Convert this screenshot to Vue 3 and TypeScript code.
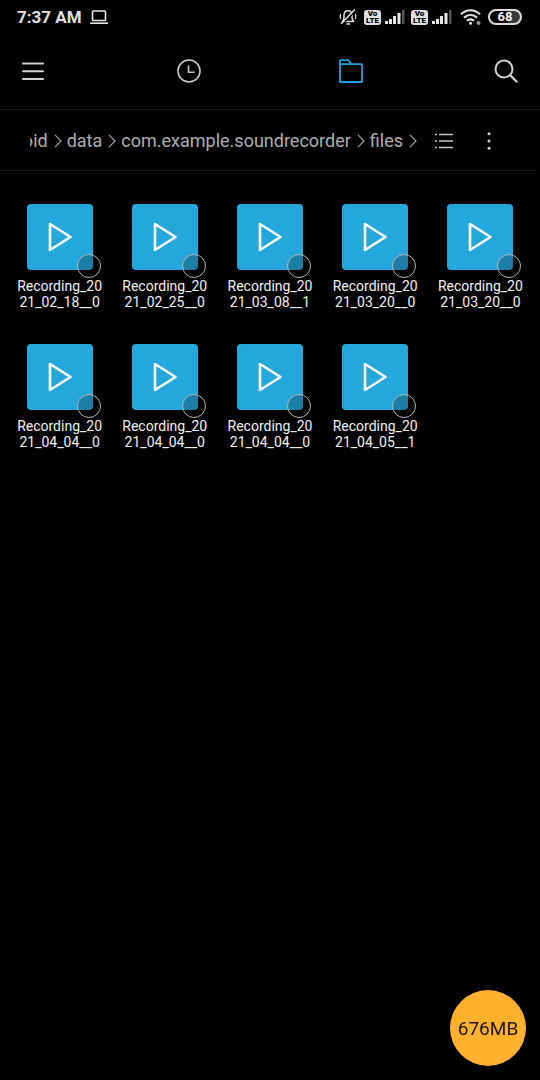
<script setup lang="ts">
import { ref } from 'vue'

interface Recording {
  id: number
  lines: [string, string]
}

const crumbs: string[] = ['Android', 'data', 'com.example.soundrecorder', 'files']

const recordings: Recording[] = [
  '21_02_18__0',
  '21_02_25__0',
  '21_03_08__1',
  '21_03_20__0',
  '21_03_20__0',
  '21_04_04__0',
  '21_04_04__0',
  '21_04_04__0',
  '21_04_05__1',
].map((rest, id) => ({ id, lines: ['Recording_20', rest] }))

const selected = ref<number[]>([])
const sims = [1, 2]
</script>

<template>
  <div class="screen">
    <header class="status">
      <div class="status-left">
        <span class="time">7:37 AM</span>
        <svg width="20" height="16" viewBox="0 0 20 16" fill="none" stroke="#e6e6e6" stroke-width="1.6">
          <rect x="3.5" y="2" width="13" height="9.5" rx="0.8" />
          <path d="M1 14.2h18" />
        </svg>
      </div>
      <div class="status-right">
        <svg class="bell" width="20" height="18" viewBox="0 0 20 18" fill="none" stroke="#e0e0e0" stroke-width="1.5" stroke-linecap="round" stroke-linejoin="round">
          <path d="M4.500 13.500h11c-1.200-1.200-1.500-2.300-1.500-4.500V7.500C14 4.500 12.300 2.800 10 2.800S6 4.500 6 7.500V9c0 2.200-.3 3.300-1.500 4.500z" />
          <path d="M9 16h2.500" />
          <path d="M2.500 6.500c-.4 1.300-.4 2.500 0 3.800M17.500 6.500c.4 1.300.4 2.500 0 3.800" stroke-width="1.300" />
          <path d="M4.800 16L17.500 2.700" stroke="#000" stroke-width="1.400" />
          <path d="M3.500 15.500L16.500 1.800" stroke-width="1.500" />
        </svg>
        <div v-for="sim in sims" :key="sim" class="sim">
          <span class="volte"><span>Vo</span><span>LTE</span></span>
          <svg width="20" height="14" viewBox="0 0 20 14" fill="#e6e6e6">
            <rect x="0" y="11" width="3" height="3" />
            <rect x="4" y="9" width="3" height="5" />
            <rect x="8" y="6" width="3" height="8" />
            <rect x="12.500" y="3" width="3" height="11" />
            <rect x="17" y="0" width="2.500" height="14" fill="#555" />
          </svg>
        </div>
        <svg class="wifi" width="22" height="18" viewBox="0 0 22 18" fill="none" stroke="#e6e6e6" stroke-width="2.200">
          <path d="M1 6.300C6.700.9 14.300.9 20 6.300" />
          <path d="M4 9.600c3.900-3.500 9.100-3.500 13 0" />
          <path d="M7 12.700c2.200-1.800 4.800-1.800 7 0" />
          <circle cx="10.500" cy="15.200" r="1.500" fill="#e6e6e6" stroke="none" />
          <circle cx="18.500" cy="15" r="2" fill="#999" stroke="none" />
        </svg>
        <span class="battery">68</span>
      </div>
    </header>

    <nav class="toolbar">
      <button type="button" class="menu" aria-label="Menu">
        <svg width="24" height="24" viewBox="0 0 24 24" stroke="#d0d0d0" stroke-width="2" stroke-linecap="round">
          <path d="M2 4.500h20M2 12.200h20M2 20h20" />
        </svg>
      </button>
      <button type="button" aria-label="Recent">
        <svg width="24" height="24" viewBox="0 0 24 24" fill="none" stroke="#cacaca" stroke-width="1.600">
          <circle cx="12" cy="12" r="11" />
          <path d="M11.500 6.500v6.700h6" />
        </svg>
      </button>
      <button type="button" aria-label="Folders">
        <svg width="24" height="24" viewBox="0 0 24 24" fill="none" stroke="#219fdc" stroke-width="1.800" stroke-linejoin="round">
          <path d="M1 23V1.200h8.500l3 4H23V23zM1 5.200h11.500" />
        </svg>
      </button>
      <button type="button" class="search" aria-label="Search">
        <svg width="24" height="24" viewBox="0 0 24 24" fill="none" stroke="#d0d0d0" stroke-width="2" stroke-linecap="round">
          <circle cx="10" cy="10" r="8.500" />
          <path d="M16 16l6.500 6.500" stroke-width="2.400" />
        </svg>
      </button>
    </nav>

    <div class="pathbar">
      <div class="crumbs">
        <a v-for="crumb in crumbs" :key="crumb" href="#">
          <span>{{ crumb }}</span>
          <svg width="8" height="14" viewBox="0 0 8 14" fill="none" stroke="#a0a0a0" stroke-width="1.200">
            <path d="M1 .8l6 6.200-6 6.200" />
          </svg>
        </a>
      </div>
      <button type="button" class="view" aria-label="List view">
        <svg width="18" height="18" viewBox="0 0 18 18" stroke="#c4c4c4" stroke-width="1.500">
          <path d="M0 2.500h2M4 2.500h14M0 9h2M4 9h14M0 15.500h2M4 15.500h14" />
        </svg>
      </button>
      <button type="button" class="more" aria-label="More options">
        <svg width="4" height="18" viewBox="0 0 4 18" fill="#d0d0d0">
          <circle cx="2" cy="1.700" r="1.500" />
          <circle cx="2" cy="9" r="1.500" />
          <circle cx="2" cy="16.300" r="1.500" />
        </svg>
      </button>
    </div>

    <main class="files">
      <label v-for="rec in recordings" :key="rec.id" class="file">
        <span class="thumb">
          <svg width="24" height="30" viewBox="0 0 24 30" fill="none" stroke="#fff" stroke-width="2.600" stroke-linejoin="round">
            <path d="M2 2v26L22.500 15z" />
          </svg>
          <input v-model="selected" type="checkbox" :value="rec.id" />
        </span>
        <span class="name">{{ rec.lines[0] }}<br />{{ rec.lines[1] }}</span>
      </label>
    </main>

    <button type="button" class="memory">676MB</button>
  </div>
</template>

<style>
body {
  background: #000;
}
</style>

<style scoped>
.screen {
  min-height: 100vh;
  background: #000;
  color: #f2f2f2;
  font-family: Roboto, "Liberation Sans", sans-serif;
}

button {
  display: flex;
  align-items: center;
  justify-content: center;
  padding: 0;
  border: 0;
  background: none;
  color: inherit;
  font-family: inherit;
}

svg {
  display: block;
  flex: none;
}

.status,
.status-left,
.status-right,
.sim {
  display: flex;
  align-items: center;
}

.status {
  justify-content: space-between;
  height: 34px;
  padding: 0 18px 0 17px;
}

.status-left {
  gap: 7px;
}

.time {
  font-size: 17px;
  font-weight: 700;
  line-height: 20px;
  color: #e0e0e0;
}

.status-right {
  gap: 6px;
}

.wifi {
  margin-left: 2px;
}

.sim {
  gap: 4px;
}

.volte {
  display: flex;
  flex-direction: column;
  justify-content: center;
  width: 17px;
  height: 15px;
  border-radius: 3px;
  background: #e0e0e0;
  color: #000;
  font-size: 8px;
  font-weight: 900;
  line-height: 7px;
  text-align: center;
}

.battery {
  width: 30px;
  border: 2px solid #dcdcdc;
  border-radius: 8px;
  background: linear-gradient(90deg, #000 60%, #383838 60%);
  color: #f0f0f0;
  font-size: 13px;
  font-weight: 700;
  line-height: 12px;
  text-align: center;
}

.toolbar {
  display: grid;
  grid-template-columns: 2fr 3fr 3fr 2fr;
  height: 73px;
  padding-bottom: 2px;
  border-bottom: 1px solid #1c1c1c;
}

.menu {
  justify-content: flex-start;
  padding-left: 21px;
}

.search {
  justify-content: flex-end;
  padding-right: 22px;
}

.pathbar {
  display: flex;
  align-items: center;
  height: 58px;
  margin-right: 5px;
  padding: 2px 0 0 30px;
  border-bottom: 1px solid #1c1c1c;
}

.crumbs {
  display: flex;
  flex: 1;
  justify-content: flex-end;
  gap: 5px;
  min-width: 0;
  overflow: hidden;
}

.crumbs a {
  display: flex;
  flex: none;
  align-items: center;
  gap: 6px;
  color: #adadad;
  font-size: 18px;
  line-height: 24px;
  text-decoration: none;
}

.view {
  width: 54px;
  height: 48px;
}

.more {
  width: 36px;
  height: 48px;
  margin-right: 28px;
}

.files {
  display: grid;
  grid-template-columns: repeat(5, 1fr);
  row-gap: 34px;
  padding: 33px 7px;
}

.file {
  display: flex;
  flex-direction: column;
  align-items: center;
  gap: 8px;
}

.thumb {
  position: relative;
  display: flex;
  align-items: center;
  justify-content: center;
  width: 66px;
  height: 66px;
  border-radius: 4px;
  background: #24a8dc;
}

.thumb input {
  position: absolute;
  right: -8px;
  bottom: -8px;
  width: 24px;
  height: 24px;
  margin: 0;
  border: 1px solid #b4b8ba;
  border-radius: 50%;
  background: rgba(0, 0, 0, 0.25);
  appearance: none;
}

.thumb input:checked {
  background: #1976a0;
}

.name {
  font-size: 14px;
  line-height: 16px;
  text-align: center;
}

.memory {
  position: fixed;
  right: 14px;
  bottom: 14px;
  width: 76px;
  height: 76px;
  border-radius: 50%;
  background: #ffb12e;
  color: #1c1406;
  font-size: 19px;
}
</style>
